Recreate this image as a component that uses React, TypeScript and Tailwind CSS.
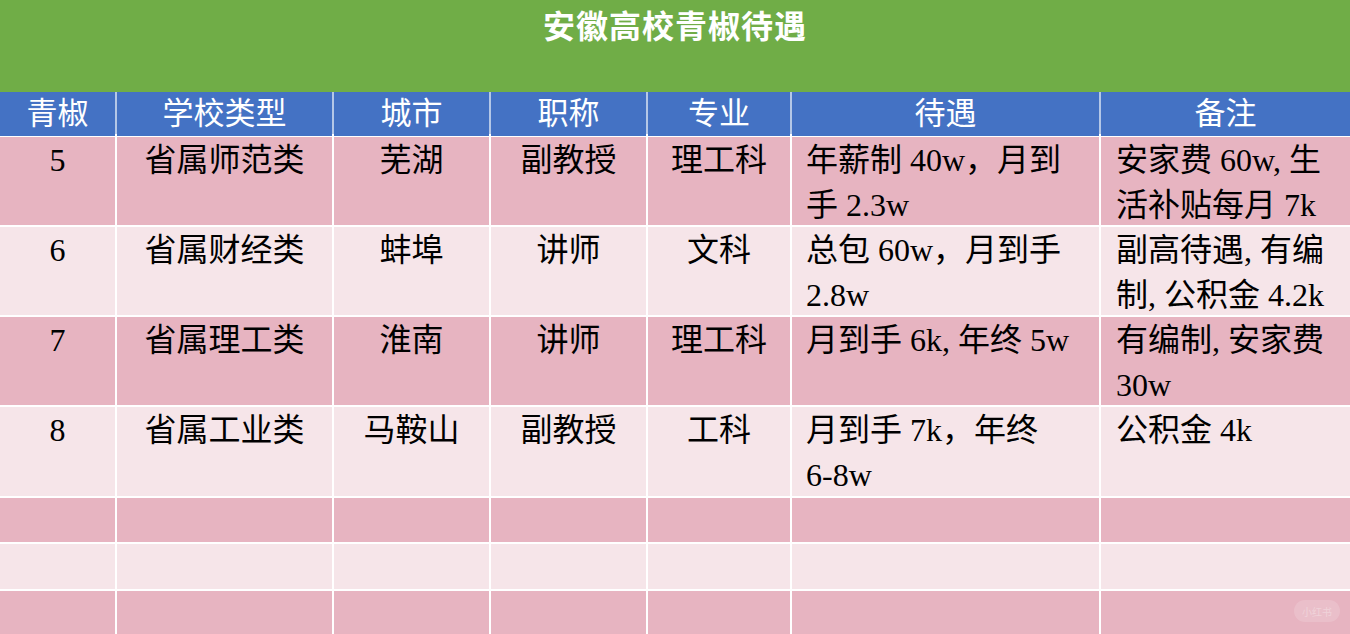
import React from "react";

const cols = "grid-cols-[115px_215px_155px_155px_142px_307px_249px]";

const headers = ["青椒", "学校类型", "城市", "职称", "专业", "待遇", "备注"];

type Row = {
  cells: string[];
  pay: string[];
  note: string[];
  h: string;
  bg: string;
};

const PINK = "bg-[#e7b4c1]";
const LIGHT = "bg-[#f6e5e9]";

const rows: Row[] = [
  { cells: ["5", "省属师范类", "芜湖", "副教授", "理工科"], pay: ["年薪制 40w，月到", "手 2.3w"], note: ["安家费 60w, 生", "活补贴每月 7k"], h: "h-[88px]", bg: PINK },
  { cells: ["6", "省属财经类", "蚌埠", "讲师", "文科"], pay: ["总包 60w，月到手", "2.8w"], note: ["副高待遇, 有编", "制, 公积金 4.2k"], h: "h-[88px]", bg: LIGHT },
  { cells: ["7", "省属理工类", "淮南", "讲师", "理工科"], pay: ["月到手 6k, 年终 5w"], note: ["有编制, 安家费", "30w"], h: "h-[88px]", bg: PINK },
  { cells: ["8", "省属工业类", "马鞍山", "副教授", "工科"], pay: ["月到手 7k，年终", "6-8w"], note: ["公积金 4k"], h: "h-[89px]", bg: LIGHT },
  { cells: ["", "", "", "", ""], pay: [], note: [], h: "h-[44px]", bg: PINK },
  { cells: ["", "", "", "", ""], pay: [], note: [], h: "h-[45px]", bg: LIGHT },
  { cells: ["", "", "", "", ""], pay: [], note: [], h: "h-[44px]", bg: PINK },
];

const bodyFont = "font-['Liberation_Serif','Noto_Sans_CJK_SC',serif]";

export default function App() {
  return (
    <div className="relative w-[1350px] h-[634px] overflow-hidden bg-white">
      <div className="h-[92px] bg-[#70ad47] flex justify-center">
        <div className="font-['Noto_Sans_CJK_SC',sans-serif] font-bold text-white text-[32px] leading-[48px] tracking-[1px]">
          安徽高校青椒待遇
        </div>
      </div>
      <div className={`grid ${cols} gap-x-[2px] bg-[#b4c7e7] h-[42px]`}>
        {headers.map((h) => (
          <div
            key={h}
            className={`bg-[#4472c4] text-white text-[31px] leading-[44px] text-center ${bodyFont}`}
          >
            {h}
          </div>
        ))}
      </div>
      <div className={`grid ${cols} gap-x-[2px] gap-y-[2px] bg-white pt-[3px] ${bodyFont} text-[32px] leading-[45px] text-black`}>
        {rows.map((r, i) => (
          <React.Fragment key={i}>
            {r.cells.map((c, j) => (
              <div key={j} className={`${r.bg} ${r.h} pt-[1px] text-center whitespace-nowrap`}>
                {c}
              </div>
            ))}
            <div className={`${r.bg} ${r.h} pt-[1px] pl-[14px] whitespace-nowrap`}>
              {r.pay.map((l, k) => (
                <div key={k}>{l}</div>
              ))}
            </div>
            <div className={`${r.bg} ${r.h} pt-[1px] pl-[15px] whitespace-nowrap`}>
              {r.note.map((l, k) => (
                <div key={k}>{l}</div>
              ))}
            </div>
          </React.Fragment>
        ))}
      </div>
      <div className="absolute right-[10px] bottom-[12px] w-[46px] h-[22px] rounded-full bg-white/15 flex items-center justify-center text-[10px] text-white/30 font-['Noto_Sans_CJK_SC',sans-serif]">
        小红书
      </div>
    </div>
  );
}
